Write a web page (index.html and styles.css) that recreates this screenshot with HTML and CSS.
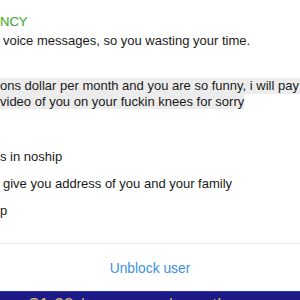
FILE: index.html
```html
<!DOCTYPE html>
<html lang="en">
<head>
<meta charset="utf-8">
<title>Chat</title>
<link rel="stylesheet" href="styles.css">
</head>
<body>
<div class="page">
  <div class="chat">
    <div class="msg first">
      <div class="name">NCY</div>
      <div class="text shift">voice messages, so you wasting your time.</div>
    </div>
    <div class="msg quote">
      <div class="hl full">ons dollar per month and you are so funny, i will pay</div>
      <div class="hl-row"><span class="hl">video of you on your fuckin knees for sorry</span></div>
    </div>
    <div class="msg gap-lg">s in noship</div>
    <div class="msg gap-sm shift">give you address of you and your family</div>
    <div class="msg gap-sm">p</div>
  </div>
  <div class="footer">
    <button class="unblock">Unblock user</button>
  </div>
  <div class="promo"><span class="promo-text">ons $1.29 / message / month</span></div>
</div>
</body>
</html>
```
FILE: styles.css
```css
html, body {
  margin: 0;
  padding: 0;
  height: 300px;
  overflow: hidden;
  background: #ffffff;
}

.page {
  font-family: "Liberation Sans", Arial, sans-serif;
  font-size: 13px;
  color: #1a1a1a;
  display: flex;
  flex-direction: column;
}

.chat {
  display: flex;
  flex-direction: column;
  padding-top: 13px;
  padding-bottom: 23px;
  border-bottom: 1px solid #ececec;
}

.msg {
  line-height: 18px;
  white-space: nowrap;
}

.name {
  color: #4aae3a;
  font-size: 13px;
  line-height: 18px;
  -webkit-text-stroke: 0.2px #4aae3a;
}

.text {
  margin-top: 1px;
}

.shift {
  padding-left: 3px;
}

.quote {
  margin-top: 28px;
  line-height: 16px;
}

.hl {
  background: #ececec;
}

.hl.full {
  display: block;
}

.hl-row {
  display: block;
}

.gap-lg {
  margin-top: 38px;
}

.gap-sm {
  margin-top: 9px;
}

.footer {
  display: flex;
  justify-content: center;
  padding: 15px 0 12px;
}

.unblock {
  background: none;
  border: 0;
  padding: 0;
  font-family: "Liberation Sans", Arial, sans-serif;
  font-size: 13.8px;
  line-height: 20px;
  color: #3d90e0;
  cursor: pointer;
}

.promo {
  background: #1b1a86;
  border-top: 1px solid #3434b0;
  height: 40px;
  overflow: hidden;
}

.promo-text {
  display: block;
  font-family: "Liberation Sans", Arial, sans-serif;
  font-size: 18px;
  line-height: 22px;
  color: #c9b772;
  white-space: nowrap;
  margin-left: -5px;
  margin-top: 2px;
}
```
